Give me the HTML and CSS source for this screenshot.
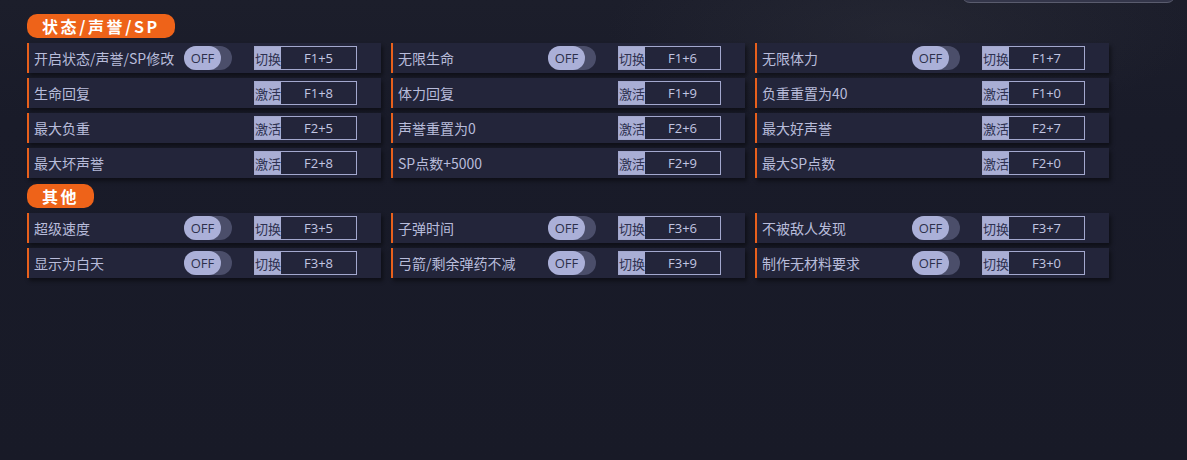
FILE: index.html
```html
<!DOCTYPE html>
<html lang="zh-CN">
<head>
<meta charset="utf-8">
<title>修改器</title>
<link rel="stylesheet" href="styles.css">
</head>
<body>
<div class="search-stub"></div>
<main class="page">
  <section class="section">
    <h2 class="section-title">状态/声誉/SP</h2>
    <div class="grid">
      <div class="card"><span class="label">开启状态/声誉/SP修改</span><span class="toggle"><span class="knob">OFF</span></span><span class="key"><span class="tag">切换</span><span class="combo">F1+5</span></span></div>
      <div class="card"><span class="label">无限生命</span><span class="toggle"><span class="knob">OFF</span></span><span class="key"><span class="tag">切换</span><span class="combo">F1+6</span></span></div>
      <div class="card"><span class="label">无限体力</span><span class="toggle"><span class="knob">OFF</span></span><span class="key"><span class="tag">切换</span><span class="combo">F1+7</span></span></div>

      <div class="card"><span class="label">生命回复</span><span class="spacer"></span><span class="key"><span class="tag">激活</span><span class="combo">F1+8</span></span></div>
      <div class="card"><span class="label">体力回复</span><span class="spacer"></span><span class="key"><span class="tag">激活</span><span class="combo">F1+9</span></span></div>
      <div class="card"><span class="label">负重重置为40</span><span class="spacer"></span><span class="key"><span class="tag">激活</span><span class="combo">F1+0</span></span></div>

      <div class="card"><span class="label">最大负重</span><span class="spacer"></span><span class="key"><span class="tag">激活</span><span class="combo">F2+5</span></span></div>
      <div class="card"><span class="label">声誉重置为0</span><span class="spacer"></span><span class="key"><span class="tag">激活</span><span class="combo">F2+6</span></span></div>
      <div class="card"><span class="label">最大好声誉</span><span class="spacer"></span><span class="key"><span class="tag">激活</span><span class="combo">F2+7</span></span></div>

      <div class="card"><span class="label">最大坏声誉</span><span class="spacer"></span><span class="key"><span class="tag">激活</span><span class="combo">F2+8</span></span></div>
      <div class="card"><span class="label">SP点数+5000</span><span class="spacer"></span><span class="key"><span class="tag">激活</span><span class="combo">F2+9</span></span></div>
      <div class="card"><span class="label">最大SP点数</span><span class="spacer"></span><span class="key"><span class="tag">激活</span><span class="combo">F2+0</span></span></div>
    </div>
  </section>
  <section class="section second">
    <h2 class="section-title">其他</h2>
    <div class="grid">
      <div class="card"><span class="label">超级速度</span><span class="toggle"><span class="knob">OFF</span></span><span class="key"><span class="tag">切换</span><span class="combo">F3+5</span></span></div>
      <div class="card"><span class="label">子弹时间</span><span class="toggle"><span class="knob">OFF</span></span><span class="key"><span class="tag">切换</span><span class="combo">F3+6</span></span></div>
      <div class="card"><span class="label">不被敌人发现</span><span class="toggle"><span class="knob">OFF</span></span><span class="key"><span class="tag">切换</span><span class="combo">F3+7</span></span></div>

      <div class="card"><span class="label">显示为白天</span><span class="toggle"><span class="knob">OFF</span></span><span class="key"><span class="tag">切换</span><span class="combo">F3+8</span></span></div>
      <div class="card"><span class="label">弓箭/剩余弹药不减</span><span class="toggle"><span class="knob">OFF</span></span><span class="key"><span class="tag">切换</span><span class="combo">F3+9</span></span></div>
      <div class="card"><span class="label">制作无材料要求</span><span class="toggle"><span class="knob">OFF</span></span><span class="key"><span class="tag">切换</span><span class="combo">F3+0</span></span></div>
    </div>
  </section>
</main>
</body>
</html>
```

FILE: styles.css
```css
* { box-sizing: border-box; }

html, body {
  margin: 0;
  height: 100%;
}

body {
  position: relative;
  overflow: hidden;
  font-family: "Noto Sans CJK SC", "Noto Sans", sans-serif;
  color: #b6bad8;
  background:
    radial-gradient(ellipse 420px 140px at 900px 30px, rgba(60, 62, 72, 0.25), transparent 70%),
    linear-gradient(#1c1e2b 0, #191b29 120px, #181a27 100%);
}

.search-stub {
  position: absolute;
  top: -20px;
  right: 12px;
  width: 213px;
  height: 23px;
  border-radius: 8px;
  background: #34364a;
  border-bottom: 1px solid #5a5c6e;
}

.page {
  padding: 14px 0 0 27px;
}

.section-title {
  display: inline-block;
  margin: 0 0 5px 0;
  height: 24px;
  line-height: 24px;
  padding: 0 15px;
  border-radius: 10px;
  background: #ee6319;
  color: #ffffff;
  font-size: 16px;
  font-weight: 700;
  letter-spacing: 2.6px;
}

.second {
  margin-top: 6px;
}

.grid {
  display: grid;
  grid-template-columns: repeat(3, 354px);
  column-gap: 10px;
  row-gap: 5px;
}

.card {
  display: grid;
  grid-template-columns: 133px 48px 103px;
  column-gap: 22px;
  align-items: center;
  height: 30px;
  background: #23253a;
  border-left: 2px solid #e8601c;
  box-shadow: 2px 3px 4px rgba(0, 0, 0, 0.45);
}

.label {
  padding-left: 5px;
  font-size: 14px;
  color: #b8bcda;
  white-space: nowrap;
}

.toggle {
  display: flex;
  width: 48px;
  height: 24px;
  border-radius: 12px;
  background: #4b4e6a;
}

.knob {
  display: flex;
  align-items: center;
  justify-content: center;
  width: 37px;
  height: 24px;
  border-radius: 12px;
  background: #abb0d8;
  color: #2d304c;
  font-family: "Open Sans", "Noto Sans", sans-serif;
  font-size: 13px;
}

.key {
  display: flex;
  height: 24px;
  border: 1px solid #a3a8ce;
}

.tag {
  display: flex;
  align-items: center;
  justify-content: center;
  width: 26px;
  background: #a9aed4;
  color: #2e3150;
  font-size: 13px;
}

.combo {
  flex: 1;
  display: flex;
  align-items: center;
  justify-content: center;
  color: #c2c6e2;
  font-family: "Open Sans", "Noto Sans", sans-serif;
  font-size: 13px;
}
```
